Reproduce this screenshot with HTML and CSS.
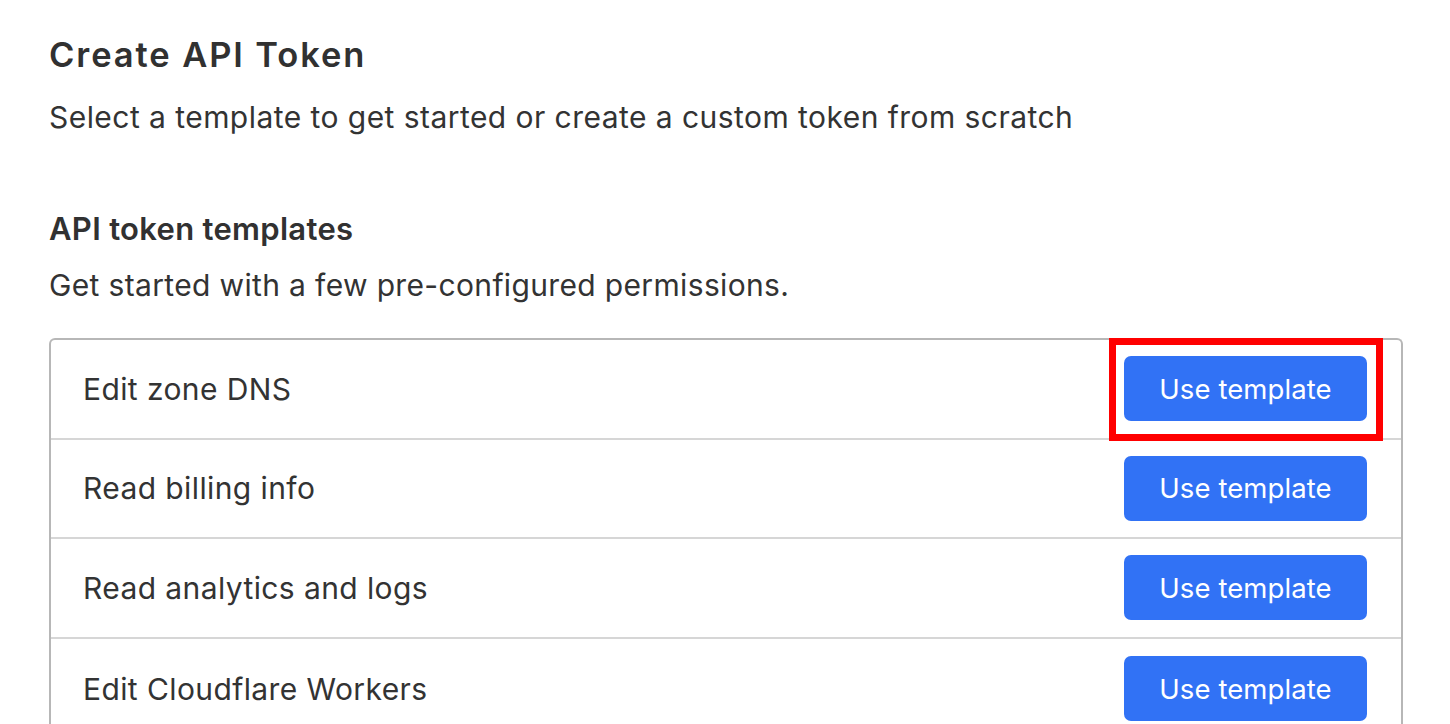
FILE: index.html
```html
<!DOCTYPE html>
<html lang="en">
<head>
<meta charset="utf-8">
<title>Create API Token</title>
<link rel="stylesheet" href="styles.css">
</head>
<body>
<main class="page">
  <h1 class="title">Create API Token</h1>
  <p class="subtitle">Select a template to get started or create a custom token from scratch</p>

  <h2 class="section-title">API token templates</h2>
  <p class="section-desc">Get started with a few pre-configured permissions.</p>

  <ul class="template-list">
    <li class="template-row">
      <span class="template-name">Edit zone DNS</span>
      <span class="highlight"><button class="btn">Use template</button></span>
    </li>
    <li class="template-row">
      <span class="template-name">Read billing info</span>
      <span class="btn-wrap"><button class="btn">Use template</button></span>
    </li>
    <li class="template-row">
      <span class="template-name">Read analytics and logs</span>
      <span class="btn-wrap"><button class="btn">Use template</button></span>
    </li>
    <li class="template-row">
      <span class="template-name">Edit Cloudflare Workers</span>
      <span class="btn-wrap"><button class="btn">Use template</button></span>
    </li>
  </ul>
</main>
</body>
</html>
```

FILE: styles.css
```css
* { box-sizing: border-box; }

html, body {
  margin: 0;
  padding: 0;
  background: #ffffff;
  overflow: hidden;
}

body {
  font-family: Inter, "Noto Sans", "Liberation Sans", sans-serif;
  color: #333333;
}

.page {
  padding: 35px 47px 0 49px;
}

.title {
  margin: 0;
  font-size: 34.5px;
  line-height: 40px;
  font-weight: 600;
  letter-spacing: 1.9px;
  color: #313131;
}

.subtitle {
  margin: 24px 0 0;
  font-size: 30px;
  line-height: 36px;
  font-weight: 400;
  letter-spacing: 0.45px;
  color: #333333;
}

.section-title {
  margin: 76px 0 0;
  font-size: 31px;
  line-height: 36px;
  font-weight: 600;
  letter-spacing: 0.3px;
  color: #313131;
}

.section-desc {
  margin: 20px 0 0;
  font-size: 30px;
  line-height: 36px;
  font-weight: 400;
  letter-spacing: 0.35px;
}

.template-list {
  list-style: none;
  margin: 35px 0 0;
  padding: 0;
  border: 2px solid #b7b7b7;
  border-bottom: none;
  border-radius: 6px 6px 0 0;
}

.template-row {
  display: flex;
  align-items: center;
  justify-content: space-between;
  height: 99.6px;
  padding: 0 34px 0 32px;
  border-bottom: 2px solid #d6d6d6;
}

.template-row:last-child {
  border-bottom: none;
}

.template-name {
  font-size: 30px;
  line-height: 36px;
  letter-spacing: 0.4px;
  color: #333333;
}

.btn-wrap,
.highlight {
  display: flex;
  padding: 0;
}

.highlight {
  position: relative;
}

.highlight::after {
  content: "";
  position: absolute;
  left: -15px;
  right: -16px;
  top: -18px;
  bottom: -20px;
  border: 7px solid #ff0000;
  pointer-events: none;
}

.btn {
  width: 243px;
  height: 65px;
  border: none;
  border-radius: 7px;
  background: #3172f5;
  color: #ffffff;
  font-family: Inter, "Noto Sans", "Liberation Sans", sans-serif;
  font-size: 27.5px;
  font-weight: 400;
  letter-spacing: 0.1px;
  padding: 0;
  cursor: pointer;
}
```
